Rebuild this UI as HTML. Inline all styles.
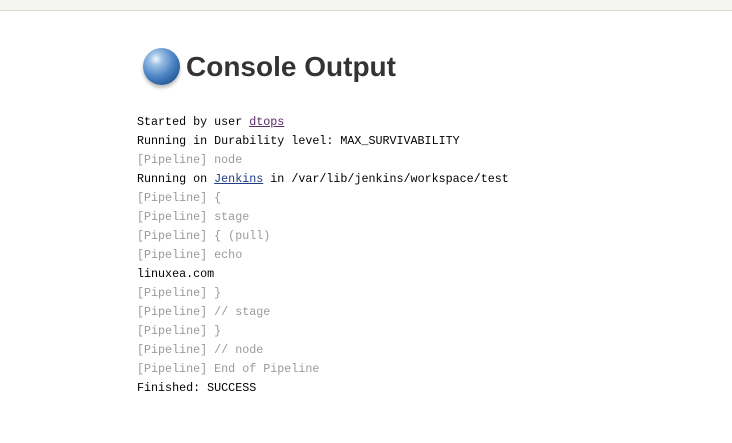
<!DOCTYPE html>
<html><head><style>
html,body{margin:0;padding:0;background:#fff;width:732px;height:443px;overflow:hidden}
.top{height:10px;background:#f5f6f0;border-bottom:1px solid #dcdcd8}
h1{position:absolute;left:186px;top:51px;margin:0;font:bold 28px "Liberation Sans",sans-serif;color:#333;line-height:32px}
.ball{position:absolute;left:143px;top:48px;width:37px;height:37px;border-radius:50%;background:radial-gradient(circle at 35% 30%,#f4f8fc 0,#9cc0e6 18%,#4d85c4 50%,#1f4f8f 85%,#2a5a96 100%);box-shadow:0 3px 3px rgba(0,0,0,.25)}
pre{position:absolute;left:137px;top:113px;margin:0;font:11.7px/19px "Liberation Mono",monospace;color:#000}
.g{color:#9a9a9a}
a{color:#1c3d87}
a.v{color:#5a2a6a}
</style></head><body>
<div class="top"></div>
<div class="ball"></div>
<h1>Console Output</h1>
<pre>Started by user <a class="v" href="#">dtops</a>
Running in Durability level: MAX_SURVIVABILITY
<span class="g">[Pipeline] node</span>
Running on <a href="#">Jenkins</a> in /var/lib/jenkins/workspace/test
<span class="g">[Pipeline] {</span>
<span class="g">[Pipeline] stage</span>
<span class="g">[Pipeline] { (pull)</span>
<span class="g">[Pipeline] echo</span>
linuxea.com
<span class="g">[Pipeline] }</span>
<span class="g">[Pipeline] // stage</span>
<span class="g">[Pipeline] }</span>
<span class="g">[Pipeline] // node</span>
<span class="g">[Pipeline] End of Pipeline</span>
Finished: SUCCESS</pre>
</body></html>
